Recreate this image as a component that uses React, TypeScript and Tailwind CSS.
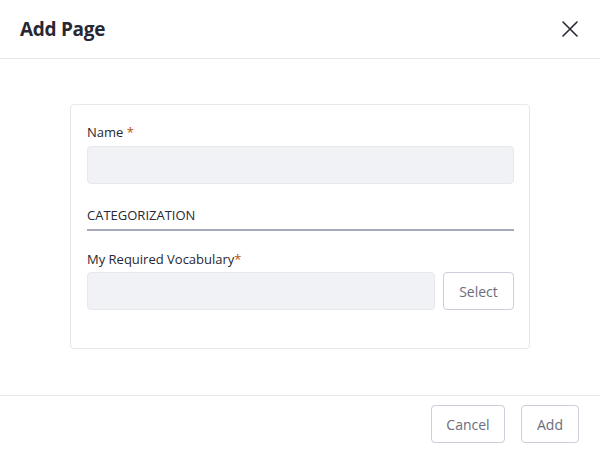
const App = () => {
  return (
    <div
      className="w-[600px] h-[450px] bg-white flex flex-col text-[#272833]"
      style={{ fontFamily: "'Open Sans', 'Noto Sans', sans-serif" }}
    >
      <div className="h-[59px] shrink-0 border-b border-[#e7e7ed] flex items-center justify-between pl-5 pr-[22px]">
        <h1 className="text-[19px] leading-[24px] font-bold text-[#272833] tracking-[-0.3px]">Add Page</h1>
        <button className="text-[#272833]">
          <svg width="16" height="16" viewBox="0 0 16 16" fill="none">
            <path d="M1 1L15 15M15 1L1 15" stroke="currentColor" strokeWidth="1.6" strokeLinecap="round" />
          </svg>
        </button>
      </div>

      <div className="flex-1 px-[70px] pt-[45px]">
        <div className="border border-[#e7e7ed] rounded-[4px] pl-4 pr-[15px] pt-[17px] pb-[38px]">
          <label className="block text-[13px] leading-[20px] font-medium text-[#272833] mb-[4px]">
            Name <span className="text-[#b95000]">*</span>
          </label>
          <div className="h-[38px] rounded-[4px] bg-[#f1f2f5] border border-[#e7e7ed]" />

          <div className="mt-[21px] text-[13px] leading-[20px] text-[#272833] pb-[4px] border-b-2 border-[#a7a9bc]">
            CATEGORIZATION
          </div>

          <label className="block mt-[18px] text-[13px] leading-[20px] font-medium text-[#272833] mb-[3px]">
            My Required Vocabulary<span className="text-[#b95000]">*</span>
          </label>
          <div className="flex gap-2">
            <div className="flex-1 h-[38px] rounded-[4px] bg-[#f1f2f5] border border-[#e7e7ed]" />
            <button className="w-[71px] h-[38px] rounded-[4px] border border-[#cdced9] bg-white text-[14px] text-[#6b6c7e]">
              Select
            </button>
          </div>
        </div>
      </div>

      <div className="h-[55px] shrink-0 border-t border-[#e7e7ed] flex items-start justify-end gap-4 pr-[21px] pt-[9px]">
        <button className="w-[74px] h-[38px] rounded-[4px] border border-[#cdced9] bg-white text-[14px] text-[#6b6c7e]">
          Cancel
        </button>
        <button className="w-[58px] h-[38px] rounded-[4px] border border-[#cdced9] bg-white text-[14px] text-[#6b6c7e]">
          Add
        </button>
      </div>
    </div>
  );
};

export default App;
